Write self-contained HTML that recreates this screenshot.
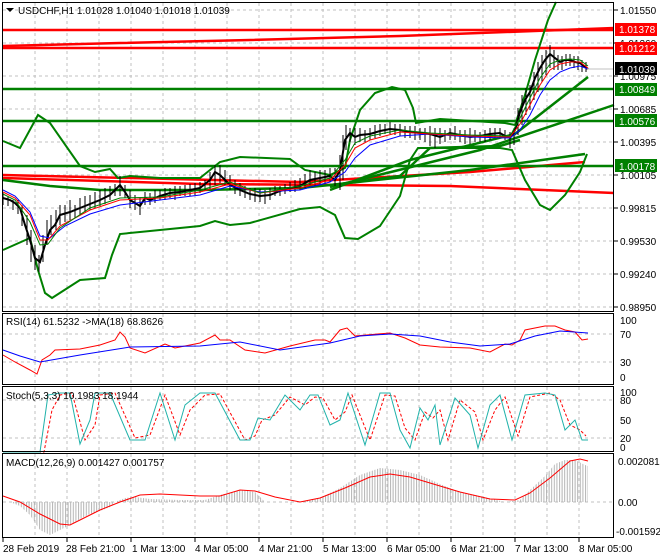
<!DOCTYPE html>
<html><head><meta charset="utf-8"><style>
html,body{margin:0;padding:0;background:#fff;}
svg{display:block;font-family:"Liberation Sans",sans-serif;font-size:10px;}
</style></head><body>
<svg width="660" height="560" viewBox="0 0 660 560" xmlns="http://www.w3.org/2000/svg">
<defs>
<pattern id="hb" width="2.6" height="4" patternUnits="userSpaceOnUse"><rect x="0" y="0" width="1" height="4" fill="#b4b4b4"/></pattern>
</defs>
<rect width="660" height="560" fill="#fff"/>
<g stroke="#c0c0c0" stroke-dasharray="3,3" stroke-width="1">
<path d="M35 3V311M67 3V311M99 3V311M131 3V311M163 3V311M195 3V311M227 3V311M259 3V311M291 3V311M323 3V311M355 3V311M387 3V311M419 3V311M451 3V311M483 3V311M515 3V311M547 3V311M579 3V311"/>
<path d="M35 314V384M67 314V384M99 314V384M131 314V384M163 314V384M195 314V384M227 314V384M259 314V384M291 314V384M323 314V384M355 314V384M387 314V384M419 314V384M451 314V384M483 314V384M515 314V384M547 314V384M579 314V384"/>
<path d="M35 387V451M67 387V451M99 387V451M131 387V451M163 387V451M195 387V451M227 387V451M259 387V451M291 387V451M323 387V451M355 387V451M387 387V451M419 387V451M451 387V451M483 387V451M515 387V451M547 387V451M579 387V451"/>
<path d="M35 454V537M67 454V537M99 454V537M131 454V537M163 454V537M195 454V537M227 454V537M259 454V537M291 454V537M323 454V537M355 454V537M387 454V537M419 454V537M451 454V537M483 454V537M515 454V537M547 454V537M579 454V537"/>
<path d="M3 10H614M3 43H614M3 76H614M3 109H614M3 142H614M3 175H614M3 208H614M3 241H614M3 274H614M3 307H614"/>
<path d="M3 334H614M3 362H614M3 400H614M3 438H614M3 502H614"/>
</g>
<g fill="none" stroke-width="2.5">
<path d="M3 30H614" stroke="#ff0000"/>
<path d="M3 46L120 43L250 40L400 36L614 28" stroke="#ff0000"/>
<path d="M3 48H614" stroke="#ff0000"/>
<path d="M3 175L300 182L470 172L585 162" stroke="#ff0000"/>
<path d="M3 178L200 184L340 185L450 186L614 193" stroke="#ff0000"/>
<path d="M3 89H614" stroke="#008000"/>
<path d="M3 121H614" stroke="#008000"/>
<path d="M3 166H614" stroke="#008000"/>
<path d="M330 190L410 160L515 134L588 77" stroke="#008000"/>
<path d="M330 187L480 150L614 105" stroke="#008000"/>
<path d="M330 185L470 170L585 154" stroke="#008000"/>
<path d="M3 180L50 186L100 190L200 190L300 188L340 184L400 176L430 148L500 146L520 140" stroke="#008000"/>
</g>
<g fill="none" stroke="#008000" stroke-width="2">
<path d="M3 141L20 148L38 115L50 123L80 166L95 172L110 169L118 178L130 176L160 178L200 178L220 162L240 157L290 159L305 170L330 175L345 168L350 140L360 110L375 93L392 87L405 90L413 108L416 123L440 119L505 123L515 125L525 95L535 60L548 20L556 2"/>
<path d="M3 250L30 238L38 270L45 293L52 298L80 280L105 278L112 255L120 234L140 232L200 226L215 221L230 225L250 223L300 209L320 207L335 215L345 238L358 239L380 226L400 196L410 160L418 148L500 148L512 150L525 180L540 205L550 210L565 195L580 172L587 154"/>
</g>
<g stroke="#000" stroke-width="1" fill="none">
<path d="M3 193V205M8 196V206M13 200V210M18 200V214M22 205V226M27 215V245M31 230V262M35 245V270M39 255V272M43 235V262M47 220V245M51 215V235M56 210V230M60 205V225M65 205V222M70 200V220M75 205V218M80 198V215M85 196V212M90 195V210M95 192V208M100 190V206M105 188V204M110 186V200M115 184V196M120 176V196M125 185V198M130 190V208M135 195V210M140 198V215M145 192V205M150 193V205M155 190V203M160 190V200M165 188V200M170 188V198M175 186V200M180 186V196M185 185V196M190 184V196M195 183V195M200 182V193M205 180V190M210 172V190M215 165V185M220 165V183M225 170V185M230 175V190M235 180V194M240 183V196M245 186V198M250 188V200M255 188V202M260 189V202M265 190V204M270 188V200M275 186V196M280 186V196M285 184V194M290 182V192M295 180V192M300 178V190M305 174V188M310 170V186M315 172V186M320 170V184M325 170V184M330 168V182M335 168V186M340 155V190M343 135V180M346 125V150M350 128V142M355 128V145M360 128V142M365 130V142M370 128V140M375 125V138M380 124V136M385 124V134M390 122V134M395 124V135M400 124V136M405 126V138M410 126V138M415 126V140M420 128V140M425 128V142M430 126V146M435 128V148M440 128V144M445 130V142M450 128V140M455 126V140M460 130V142M465 130V144M470 128V144M475 130V142M480 132V142M485 130V142M490 128V140M495 128V138M500 128V138M505 130V140M510 132V148M514 128V145M518 108V135M522 95V125M526 88V115M530 85V110M534 72V100M538 62V92M542 55V82M546 50V75M550 45V68M554 50V70M558 55V70M562 56V70M566 54V66M570 54V66M574 56V68M578 56V70M582 60V72M586 62V72"/>
</g>
<polyline fill="none" stroke="#000" stroke-width="2" points="3,198 10,200 15,203 20,208 25,225 30,240 35,258 40,262 45,245 50,230 55,225 60,215 70,212 80,208 90,204 100,200 110,195 115,190 120,185 125,192 130,200 135,203 140,206 145,198 150,200 160,196 170,193 180,192 190,190 200,188 210,180 215,172 220,175 225,180 230,185 240,190 250,194 260,196 270,195 280,191 290,188 300,186 310,180 320,178 330,176 335,180 340,170 345,140 350,133 355,137 360,135 370,134 380,131 390,129 400,130 410,132 420,133 430,134 440,137 450,133 460,135 470,137 480,136 490,134 500,133 505,136 510,138 515,130 520,112 525,100 530,92 535,78 540,68 545,60 550,54 555,58 560,62 565,60 570,60 575,62 580,63 585,67 588,69"/>
<g fill="none" stroke-width="1">
<polyline stroke="#0000ff" points="3,190 15,196 30,212 40,236 50,238 65,226 90,214 120,205 160,200 200,195 230,186 260,192 300,190 330,182 345,172 355,158 370,145 400,136 430,134 470,137 510,138 520,130 530,115 540,95 550,80 560,72 570,68 580,66 588,69"/>
<polyline stroke="#ff0000" points="3,192 15,198 30,215 40,240 48,240 60,226 90,210 120,200 160,198 200,192 230,184 260,193 300,188 330,180 345,165 355,148 370,140 400,132 430,134 470,136 510,137 520,124 530,105 540,85 550,70 560,64 570,62 580,62 588,68"/>
<polyline stroke="#008000" points="3,194 15,200 30,222 40,245 48,244 60,228 90,208 120,198 160,197 200,190 230,182 260,193 300,186 330,178 345,160 355,143 370,136 400,130 430,133 470,135 510,136 520,118 530,98 540,78 550,64 560,60 570,59 580,60 588,66"/>
</g>
<rect x="587" y="68.5" width="27" height="1" fill="#c0c0c0"/>
<g fill="none" stroke-width="1">
<polyline stroke="#ff0000" points="3,355 15,362 30,370 37,374 42,360 50,355 55,350 80,349 100,345 115,340 120,332 125,337 130,348 145,353 165,344 175,348 200,343 215,335 220,340 230,340 245,350 265,353 290,346 315,340 325,340 330,342 340,330 347,328 355,336 390,333 405,338 420,345 440,347 470,348 490,352 505,344 512,345 520,340 525,330 545,326 555,326 565,330 575,332 582,340 588,339"/>
<polyline stroke="#0000ff" points="3,350 20,356 40,362 80,355 130,347 200,346 240,342 280,350 330,343 360,336 390,334 420,336 450,342 480,346 510,344 535,336 560,331 588,333"/>
</g>
<polyline fill="none" stroke="#ff0000" stroke-width="1" stroke-dasharray="3,2" points="3,452 44,452 52,410 60,395 72,393 85,440 95,425 100,395 115,393 135,438 150,435 165,395 180,435 190,410 205,395 220,394 245,440 255,436 262,420 275,415 290,397 305,405 315,397 323,398 335,420 345,412 352,395 370,440 385,395 395,396 405,428 415,440 425,412 433,418 440,410 448,440 460,400 475,412 483,440 495,410 505,397 518,436 530,397 550,393 560,400 570,425 580,430 586,436"/>
<polyline fill="none" stroke="#20b2aa" stroke-width="1" points="3,452 40,452 48,395 60,393 70,393 80,444 90,420 95,393 110,393 130,440 145,440 160,393 175,440 185,405 200,393 215,393 240,440 250,440 258,418 270,420 285,395 300,410 310,395 318,395 330,425 340,420 348,393 365,445 380,393 390,393 400,430 410,448 420,408 428,420 435,405 440,445 455,398 470,415 478,448 490,405 500,395 512,440 525,395 545,393 555,395 565,430 575,420 582,440 588,440"/>
<polygon fill="url(#hb)" points="10,502 20,506 30,515 40,530 50,535 60,530 70,525 80,519 90,514 100,511 110,507 115,502 125,498 135,497 150,499 180,500 205,500 220,495 240,490 255,492 265,502 300,502 320,498 340,488 360,475 380,468 400,470 420,475 440,484 460,492 480,496 505,502 520,500 530,490 545,476 555,464 565,460 575,460 585,465 588,466 588,502"/>
<polyline fill="none" stroke="#ff0000" stroke-width="1" points="3,496 20,502 40,514 60,524 70,525 80,520 100,510 120,502 140,495 160,494 200,496 220,496 240,490 255,491 275,497 300,502 320,498 345,488 370,477 390,474 410,477 430,483 460,492 490,499 515,500 530,493 550,478 570,461 580,459 588,461"/>
<g fill="none" stroke="#000" stroke-width="1">
<rect x="2.5" y="2.5" width="611" height="309"/>
<rect x="2.5" y="313.5" width="611" height="71"/>
<rect x="2.5" y="386.5" width="611" height="65"/>
<rect x="2.5" y="453.5" width="611" height="84"/>
<path d="M614 10h4M614 43h4M614 76h4M614 109h4M614 142h4M614 175h4M614 208h4M614 241h4M614 274h4M614 307h4M3 538v4M67 538v4M131 538v4M195 538v4M259 538v4M323 538v4M387 538v4M451 538v4M515 538v4M579 538v4"/>
</g>
<path d="M6 8h8l-4 4z" fill="#000"/>
<text x="18" y="14" fill="#000">USDCHF,H1  1.01028 1.01040 1.01018 1.01039</text>
<g fill="#000">
<text x="620" y="14">1.01550</text>
<text x="620" y="47">1.01260</text>
<text x="620" y="80">1.00975</text>
<text x="620" y="113">1.00685</text>
<text x="620" y="146">1.00395</text>
<text x="620" y="179">1.00105</text>
<text x="620" y="212">0.99815</text>
<text x="620" y="245">0.99530</text>
<text x="620" y="278">0.99240</text>
<text x="620" y="311">0.98950</text>
</g>
<rect x="615" y="23" width="42" height="13" fill="#ff0000"/><text x="619" y="33" fill="#fff">1.01378</text>
<rect x="615" y="42" width="42" height="13" fill="#ff0000"/><text x="619" y="52" fill="#fff">1.01212</text>
<rect x="615" y="62" width="42" height="13" fill="#000"/><text x="619" y="73" fill="#fff">1.01039</text>
<rect x="615" y="83" width="42" height="13" fill="#008000"/><text x="619" y="93" fill="#fff">1.00849</text>
<rect x="615" y="114" width="42" height="13" fill="#008000"/><text x="619" y="125" fill="#fff">1.00576</text>
<rect x="615" y="159" width="42" height="13" fill="#008000"/><text x="619" y="170" fill="#fff">1.00178</text>
<g fill="#000">
<text x="6" y="325">RSI(14) 61.5232  -&gt;MA(18) 68.8626</text>
<text x="620" y="324">100</text><text x="620" y="338">70</text><text x="620" y="366">30</text><text x="620" y="381">0</text>
<text x="6" y="399">Stoch(5,3,3) 10.1983 18.1944</text>
<text x="620" y="396">100</text><text x="620" y="404">80</text><text x="620" y="424">50</text><text x="620" y="442">20</text><text x="620" y="451">0</text>
<text x="6" y="466">MACD(12,26,9) 0.001427 0.001757</text>
<text x="618" y="465">0.002081</text><text x="618" y="506">0.00</text><text x="616" y="535">-0.001592</text>
<text x="3" y="552">28 Feb 2019</text>
<text x="66" y="552">28 Feb 21:00</text>
<text x="132" y="552">1 Mar 13:00</text>
<text x="195" y="552">4 Mar 05:00</text>
<text x="259" y="552">4 Mar 21:00</text>
<text x="323" y="552">5 Mar 13:00</text>
<text x="387" y="552">6 Mar 05:00</text>
<text x="451" y="552">6 Mar 21:00</text>
<text x="515" y="552">7 Mar 13:00</text>
<text x="579" y="552">8 Mar 05:00</text>
</g>
</svg>
</body></html>
